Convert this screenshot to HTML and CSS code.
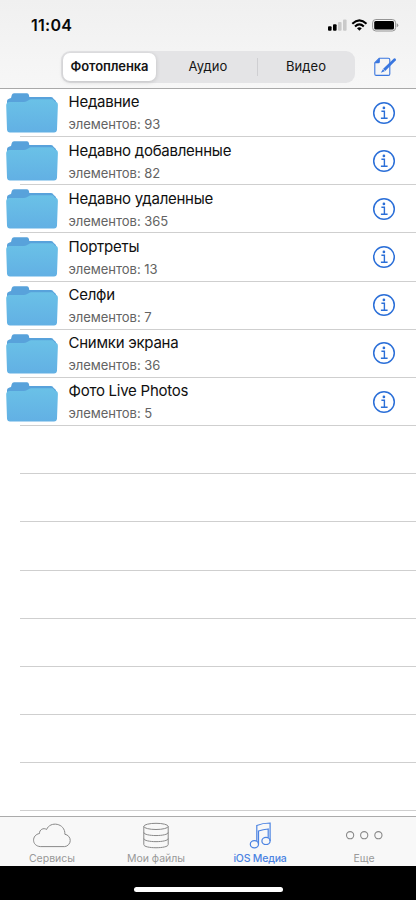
FILE: index.html
```
<!DOCTYPE html>
<html lang="ru">
<head>
<meta charset="utf-8">
<meta name="viewport" content="width=device-width, initial-scale=1">
<title>iOS Медиа</title>
<link rel="stylesheet" href="styles.css">
</head>
<body>
<svg class="defs" width="0" height="0" aria-hidden="true">
  <defs>
    <linearGradient id="folder-face" x1="0" y1="0" x2="0" y2="1">
      <stop offset="0" stop-color="#6ac1e7"/>
      <stop offset="1" stop-color="#62b0e4"/>
    </linearGradient>
    <symbol id="folder" viewBox="0 0 52 40">
      <path d="M1 12V8q0-2 2.500-2.500L5 5l.8-3Q6.300.2 8 .2h13q1.600 0 1.900 1.700l.4 2.100H45q2 0 2.500 1.700L50 8v4Z" fill="#58a2db"/>
      <path d="M.2 12.500Q.2 9 3.500 9H18q1.500 0 2.700-.8L23 6.900q.8-.6 2-.6h21q1.300 0 1.800 1l.8 1.200q3.300.3 3.300 3.500L51 36.500Q50.800 39.500 48 39.500H4Q1.200 39.500 1 36.500Z" fill="url(#folder-face)"/>
    </symbol>
    <symbol id="info" viewBox="0 0 24 24">
      <g fill="none" stroke="#2b6fd8" stroke-width="1.500">
        <circle cx="12" cy="12" r="10.300"/>
        <path d="M9.400 10.200h3v7.200M8.900 17.300h6.700" stroke-width="1.400"/>
      </g>
      <circle cx="11.900" cy="6.900" r="1.350" fill="#2b6fd8"/>
    </symbol>
  </defs>
</svg>
<div class="phone">
  <header class="header">
    <div class="status">
      <span class="time">11:04</span>
      <svg class="status-icons" width="74" height="16" viewBox="0 0 74 16">
        <rect x="3" y="9.300" width="3.600" height="4.500" rx="1"/>
        <rect x="8" y="7.200" width="3.600" height="6.600" rx="1"/>
        <rect x="13" y="5" width="3.600" height="8.800" rx="1" fill="#c9c9c9"/>
        <rect x="18" y="2.500" width="3.600" height="11.300" rx="1" fill="#c9c9c9"/>
        <g fill="none" stroke="#000" stroke-width="2.100">
          <path d="M27.300 6.700Q34.400.2 41.500 6.700"/>
          <path d="M30 9.400Q34.400 5.300 38.800 9.400"/>
        </g>
        <path d="M32 11.200Q34.400 9.200 36.800 11.200L34.400 13.700Z"/>
        <rect x="47.600" y="2.500" width="23" height="11.500" rx="3.300" fill="#f4f4f4" stroke="#949494" stroke-width="1"/>
        <rect x="49.200" y="4.100" width="19.800" height="8.300" rx="1.500"/>
        <path d="M71.700 6.200q1.600.5 1.600 2t-1.600 2Z" fill="#999"/>
      </svg>
    </div>
    <div class="toolbar">
      <div class="segments">
        <span class="segment selected">Фотопленка</span>
        <span class="segment audio">Аудио</span>
        <span class="segment video">Видео</span>
      </div>
      <svg class="compose" width="24" height="20" viewBox="0 0 24 20">
        <path d="M6.200 1.300H15.400Q16.800 1.300 16.800 2.700V17Q16.800 18.400 15.400 18.400H3.200Q1.800 18.400 1.800 17V5.800Z" fill="none" stroke="#3976df" stroke-width="1.100"/>
        <path d="M1.600 6.300 6.900.9V4.800q0 1.500-1.500 1.500Z" fill="#3976df"/>
        <path d="M7.800 15.800 10.200 11.700 20.900 1.600q.9-.7 1.700.1.800.8.1 1.700L12.200 14Z" fill="#3976df"/>
        <path d="m9.800 11.900 2.400 2.300" stroke="#f4f4f4" stroke-width=".6"/>
      </svg>
    </div>
  </header>
  <main class="list">
    <div class="row"><svg class="folder"><use href="#folder"/></svg><div class="label"><div class="name">Недавние</div><div class="count">элементов: 93</div></div><svg class="info"><use href="#info"/></svg></div>
    <div class="row"><svg class="folder"><use href="#folder"/></svg><div class="label"><div class="name">Недавно добавленные</div><div class="count">элементов: 82</div></div><svg class="info"><use href="#info"/></svg></div>
    <div class="row"><svg class="folder"><use href="#folder"/></svg><div class="label"><div class="name">Недавно удаленные</div><div class="count">элементов: 365</div></div><svg class="info"><use href="#info"/></svg></div>
    <div class="row"><svg class="folder"><use href="#folder"/></svg><div class="label"><div class="name">Портреты</div><div class="count">элементов: 13</div></div><svg class="info"><use href="#info"/></svg></div>
    <div class="row"><svg class="folder"><use href="#folder"/></svg><div class="label"><div class="name">Селфи</div><div class="count">элементов: 7</div></div><svg class="info"><use href="#info"/></svg></div>
    <div class="row"><svg class="folder"><use href="#folder"/></svg><div class="label"><div class="name">Снимки экрана</div><div class="count">элементов: 36</div></div><svg class="info"><use href="#info"/></svg></div>
    <div class="row"><svg class="folder"><use href="#folder"/></svg><div class="label"><div class="name">Фото Live Photos</div><div class="count">элементов: 5</div></div><svg class="info"><use href="#info"/></svg></div>
    <div class="row"></div>
    <div class="row"></div>
    <div class="row"></div>
    <div class="row"></div>
    <div class="row"></div>
    <div class="row"></div>
    <div class="row"></div>
    <div class="row"></div>
  </main>
  <nav class="tabs">
    <div class="tab">
      <svg width="40" height="28" viewBox="0 0 40 28"><path d="M8.300 24.600H32.700A6.200 6.200 0 0 0 32.900 12.300C33.300.9 18-1.200 14.600 7.500C11.500 5.300 7.200 7.800 7.500 11.500C-.5 12.900-.6 23.900 8.300 24.600Z"/></svg>
      <span>Сервисы</span>
    </div>
    <div class="tab">
      <svg width="40" height="28" viewBox="0 0 40 28"><ellipse cx="20" cy="4.400" rx="12.200" ry="3.100"/><path d="M7.800 4.400V22.600C7.800 26.800 32.200 26.800 32.200 22.600V4.400M7.800 10.400C7.800 14.600 32.200 14.600 32.200 10.400M7.800 16.500C7.800 20.700 32.200 20.700 32.200 16.500"/></svg>
      <span>Мои файлы</span>
    </div>
    <div class="tab active">
      <svg width="40" height="28" viewBox="0 0 40 28"><g stroke-width="1.200"><ellipse cx="14.400" cy="22.200" rx="4.100" ry="3.600"/><ellipse cx="26" cy="18.900" rx="4.100" ry="3.600"/><path d="M16.800 19V3.500Q22.500 1 30.100 1V18.900M18.500 22.200V9Q23 7.300 28.200 7V15.800"/></g></svg>
      <span>iOS Медиа</span>
    </div>
    <div class="tab">
      <svg width="40" height="28" viewBox="0 0 40 28"><g stroke-width="1.100"><circle cx="6.100" cy="13.200" r="3.600"/><circle cx="20.200" cy="13.200" r="3.600"/><circle cx="34.400" cy="13.200" r="3.600"/></g></svg>
      <span>Еще</span>
    </div>
  </nav>
  <footer class="home"><div class="home-bar"></div></footer>
</div>
</body>
</html>
```
FILE: styles.css
```
* { box-sizing: border-box; }
body { margin: 0; background: #fff; font-family: Inter, "Liberation Sans", sans-serif; }
.defs { display: block; }
.phone { display: flex; flex-direction: column; width: 416px; height: 900px; overflow: hidden; }
.header { flex: none; height: 89px; background: linear-gradient(#f0f0f0, #f7f7f7); border-bottom: 1px solid #a9a9a9; }
.status { display: flex; justify-content: space-between; height: 50px; padding: 15px 17px 0 31px; }
.time { font-size: 16px; line-height: 20px; font-weight: 600; letter-spacing: .25px; color: #080808; }
.status-icons { margin-top: 2px; }
.toolbar { display: flex; align-items: center; height: 33px; padding-left: 61px; }
.segments { display: grid; grid-template-columns: 98px 98px 98px; width: 294px; height: 32px; padding: 2px 0; border-radius: 9px; background: #e4e4e6; }
.segment { display: flex; align-items: center; justify-content: center; padding-bottom: 1px; font-size: 13px; font-weight: 400; letter-spacing: .1px; color: #151515; }
.selected { margin: 0 3px 0 2px; border-radius: 7px; background: #fff; box-shadow: 0 1px 4px rgba(0, 0, 0, .16); font-weight: 600; letter-spacing: -.1px; }
.video { position: relative; }
.video::before { content: ""; position: absolute; left: 0; top: 5px; width: 1px; height: 18px; background: #cfcfd2; }
.compose { margin-left: 18px; }
.list { flex: none; height: 727px; overflow: hidden; }
.row { position: relative; display: flex; height: 48.17px; }
.row::after { content: ""; position: absolute; left: 20px; right: 0; bottom: 0; height: 1px; background: #cfcfcf; }
.folder { flex: none; width: 52px; height: 40px; margin: 4px 0 0 6px; }
.label { flex: 1; padding: 3.400px 0 0 10.500px; white-space: nowrap; }
.name { font-size: 15px; line-height: 19px; letter-spacing: -.25px; color: #101010; }
.count { margin-top: 4px; font-size: 13px; line-height: 18px; letter-spacing: -.03px; color: #636363; }
.info { flex: none; width: 24px; height: 24px; margin: 11.700px 20px 0 0; }
.tabs { flex: none; display: grid; grid-template-columns: repeat(4, 1fr); height: 50px; background: #f8f8f8; border-top: 1px solid #ababab; }
.tab { display: flex; flex-direction: column; align-items: center; padding-top: 5px; color: #999; font-size: 10.500px; line-height: 14px; }
.tab svg { fill: none; stroke: #898989; stroke-width: 1; }
.tab span { margin-top: 2px; white-space: nowrap; }
.active { color: #4b83e2; font-weight: 500; }
.active span { letter-spacing: -.2px; }
.active svg { stroke: #4b83e2; }
.home { flex: 1; background: #000; padding-top: 21px; }
.home-bar { width: 149px; height: 5px; margin: 0 auto; border-radius: 3px; background: #fff; }
```
